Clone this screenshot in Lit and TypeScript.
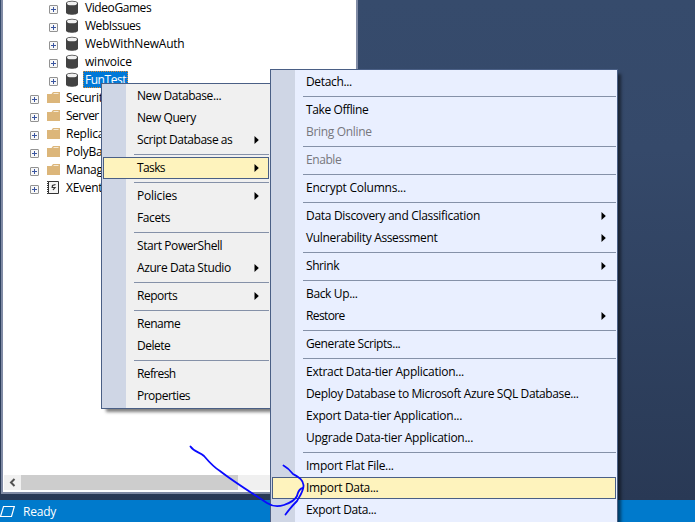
import { LitElement, html, css, svg } from "lit";
import { customElement, property } from "lit/decorators.js";
import { classMap } from "lit/directives/class-map.js";
import { styleMap } from "lit/directives/style-map.js";

// ls: extra tracking for the label, in px
type Entry = "-" | { t: string; sub?: boolean; hot?: boolean; off?: boolean; ls: number };

const BASE_TRACKING = -0.22;
const tracking = (ls: number) => styleMap({ letterSpacing: `${(BASE_TRACKING + ls).toFixed(2)}px` });

const MAIN: Entry[] = [
  { t: "New Database...", ls: -0.2 }, { t: "New Query", ls: -0.2 }, { t: "Script Database as", sub: true, ls: -0.22 }, "-",
  { t: "Tasks", sub: true, hot: true, ls: -0.4 }, "-",
  { t: "Policies", sub: true, ls: 0 }, { t: "Facets", ls: -0.15 }, "-",
  { t: "Start PowerShell", ls: -0.2 }, { t: "Azure Data Studio", sub: true, ls: -0.18 }, "-",
  { t: "Reports", sub: true, ls: -0.28 }, "-",
  { t: "Rename", ls: -0.25 }, { t: "Delete", ls: -0.3 }, "-",
  { t: "Refresh", ls: -0.4 }, { t: "Properties", ls: -0.28 },
];

const TASKS: Entry[] = [
  { t: "Detach...", ls: -0.12 }, "-",
  { t: "Take Offline", ls: -0.17 }, { t: "Bring Online", off: true, ls: -0.1 }, "-",
  { t: "Enable", off: true, ls: -0.2 }, "-",
  { t: "Encrypt Columns...", ls: -0.02 }, "-",
  { t: "Data Discovery and Classification", sub: true, ls: -0.09 }, { t: "Vulnerability Assessment", sub: true, ls: -0.13 }, "-",
  { t: "Shrink", sub: true, ls: -0.2 }, "-",
  { t: "Back Up...", ls: -0.13 }, { t: "Restore", sub: true, ls: -0.4 }, "-",
  { t: "Generate Scripts...", ls: -0.2 }, "-",
  { t: "Extract Data-tier Application...", ls: -0.04 }, { t: "Deploy Database to Microsoft Azure SQL Database...", ls: -0.16 },
  { t: "Export Data-tier Application...", ls: -0.04 }, { t: "Upgrade Data-tier Application...", ls: -0.05 }, "-",
  { t: "Import Flat File...", ls: -0.06 }, { t: "Import Data...", hot: true, ls: -0.12 }, { t: "Export Data...", ls: -0.15 },
];

@customElement("context-menu")
class ContextMenu extends LitElement {
  @property({ attribute: false }) entries: Entry[] = [];
  static styles = css`
    :host { display: block; box-sizing: border-box; border: 1px solid #4a5f85; padding: 1px;
      background: linear-gradient(90deg, #cfd6e5 24px, var(--menu-bg) 24px);
      box-shadow: 4px 4px 3px -1px rgba(0,0,0,.5); }
    .item { display: flex; align-items: center; justify-content: space-between; box-sizing: border-box;
      height: 22px; padding: 0 9px 0 33px; border: 1px solid transparent; white-space: pre; }
    .item span { margin-bottom: 2px; }
    .hot { background: #fef3bd; border-color: #4a5f85; }
    .off { color: #77777d; }
    .sep { height: 1px; margin: 3px 0 2px 31px; background: #8591a8; }
    svg { display: block; width: 5px; height: 8px; }
  `;
  render() {
    return this.entries.map((e) => e === "-"
      ? html`<div class="sep"></div>`
      : html`<div class=${classMap({ item: true, hot: !!e.hot, off: !!e.off })}><span style=${tracking(e.ls)}>${e.t}</span>${e.sub
          ? html`<svg viewBox="0 0 5 8"><path d="M0.5 0v8L4.8 4z" fill="#000"/></svg>` : ""}</div>`);
  }
}

const plus = svg`<rect x=".5" y=".5" width="8" height="8" rx=".5" fill="#f8f8f8" stroke="#929292"/><path d="M2 4.5h5M4.5 2v5" stroke="#3a55a0"/>`;
const ICONS: Record<string, unknown> = {
  db: svg`<path d="M1 3.200v9.300c0 3 12 3 12 0V3.200z" fill="#424242"/><ellipse cx="7" cy="3.400" rx="6" ry="2.700" fill="#424242"/><ellipse cx="7" cy="3.400" rx="5" ry="1.900" fill="#f0f0f0"/>`,
  folder: svg`<path d="M1 4h4.500l1.500-2h7v11H1z" fill="#dcb67a"/><path d="M7.500 3.500h5" stroke="#f5ead6"/>`,
  xe: svg`<path d="M2.500 1.500h10v12h-10z" fill="#f4f4f4" stroke="#333"/><path d="M1.800 1v13" stroke="#333" stroke-width="1.600" stroke-dasharray="1 1"/><path d="M9.500 4.500L6.500 5.500L6.200 7.500H9L7 10" fill="none" stroke="#333" stroke-width="1.200"/>`,
};

const TREE: [string, string, number][] = [
  ["VideoGames", "db", -0.2], ["WebIssues", "db", -0.25], ["WebWithNewAuth", "db", 0], ["winvoice", "db", 0], ["FunTest", "db", -0.25],
  ["Securit", "folder", -0.05], ["Server", "folder", -0.3], ["Replica", "folder", -0.05], ["PolyBa", "folder", -0.05],
  ["Manag", "folder", -0.05], ["XEvent", "xe", -0.05],
];

@customElement("app-root")
class AppRoot extends LitElement {
  static styles = css`
    :host { display: flex; flex-direction: column; position: relative; width: 695px; height: 522px; overflow: hidden;
      font: 12px "Open Sans", "Noto Sans", sans-serif; letter-spacing: -.22px; color: #000;
      background: linear-gradient(#364b6c 0, #35496a 150px, #293955 500px); }
    .panel { display: flex; flex-direction: column; box-sizing: border-box; width: 357px; height: 494px; margin-left: 1px;
      border: solid #8e9bbc; border-width: 0 2px 2px 2px; background: #fff; border-color: #808ba5; }
    .tree { flex: 1; margin-top: -1px; }
    .row { display: flex; align-items: center; height: 18px; padding-left: 27px; }
    .row.db { padding-left: 46px; }
    .row .exp { width: 9px; height: 9px; margin: 3px 7px 0 0; }
    .row .ico { width: 16px; height: 16px; margin-right: 2px; }
    .row .name { padding: 0 2px; line-height: 17px; margin-bottom: 1px; }
    .row .sel { background: #0078d7; color: #fff; outline: 1px dotted #e08a30; outline-offset: -1px; }
    .scroll { display: flex; align-items: center; height: 15px; margin: 0 0 2px 1px; background: #f0f0f0; }
    .scroll svg { width: 17px; height: 15px; }
    .thumb { width: 217px; height: 15px; background: #cdcdcd; }
    .status { display: flex; align-items: center; height: 22px; margin-top: 6px; background: #007acc; color: #fff; }
    .status svg { width: 16px; height: 14px; margin-right: 7px; }
    context-menu { position: absolute; }
    .main { left: 101px; top: 83px; width: 170px; --menu-bg: #f0f0f0; }
    .tasks { left: 270px; top: 69px; width: 348px; height: 470px; --menu-bg: #e9efff; }
    .ink { position: absolute; left: 0; top: 0; width: 695px; height: 522px; }
  `;
  render() {
    return html`
      <div class="panel">
        <div class="tree">${TREE.map(([n, k, ls]) => html`<div class="row ${k}">
          <svg class="exp" viewBox="0 0 9 9">${plus}</svg>
          <svg class="ico" viewBox="0 0 16 16">${ICONS[k]}</svg>
          <span class=${classMap({ name: true, sel: n === "FunTest" })} style=${tracking(ls)}>${n}</span></div>`)}</div>
        <div class="scroll"><svg viewBox="0 0 17 15"><path d="M10.500 4L7 7.500L10.500 11" fill="none" stroke="#505050" stroke-width="2"/></svg><div class="thumb"></div></div>
      </div>
      <div class="status"><svg viewBox="0 0 16 14"><path d="M3.500 2.500H14.300L11.500 12.500H.5z" fill="none" stroke="#fff" stroke-width="1.200"/></svg><span>Ready</span></div>
      <context-menu class="main" .entries=${MAIN}></context-menu>
      <context-menu class="tasks" .entries=${TASKS}></context-menu>
      <svg class="ink" viewBox="0 0 695 522" fill="none" stroke="#0a0aff" stroke-width="1.800" stroke-linecap="round" stroke-linejoin="round">
        <path d="M190.500 446.500C194 452 200 452 204 456C210 463 215 468 220 471C234 482 252 493 267 503C273 507 278 507 284 505C290 503 295 500 297 496C298 493 298 489 303 488"/>
        <path d="M283.500 465.500C288 468 290 470 293 474C298 477 303 479 303.500 485C304 490 301 494 297 501Q291 507 285.500 514.500"/>
      </svg>`;
  }
}
